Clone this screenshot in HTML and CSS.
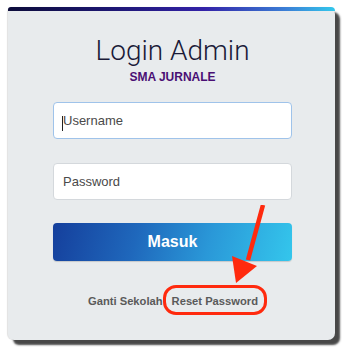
FILE: index.html
```html
<!DOCTYPE html>
<html>
<head>
<meta charset="utf-8">
<link rel="stylesheet" href="styles.css">
</head>
<body>
<div class="card">
  <div class="topbar"></div>
  <h1 class="title">Login Admin</h1>
  <div class="school">SMA JURNALE</div>
  <form class="form">
    <input class="field field-focus" type="text" placeholder="Username">
    <input class="field" type="password" placeholder="Password">
    <button class="btn" type="button">Masuk</button>
  </form>
  <div class="links">
    <a class="link">Ganti Sekolah</a>
    <a class="link">Reset Password</a>
  </div>
  <span class="caret"></span>
  <div class="highlight"></div>
  <svg class="arrow" width="60" height="90" viewBox="0 0 60 90">
    <line x1="35" y1="0" x2="20" y2="55" stroke="#ff2a0e" stroke-width="4.5" stroke-linecap="butt"/>
    <polygon points="4,51 29,61 8,78" fill="#ff2a0e"/>
  </svg>
</div>
</body>
</html>
```
FILE: styles.css
```css
html, body {
  margin: 0;
  padding: 0;
  background: #ffffff;
}
body {
  width: 350px;
  height: 360px;
  overflow: hidden;
  font-family: "Liberation Sans", Arial, sans-serif;
}
.card {
  position: relative;
  margin: 7px 0 0 8px;
  width: 327px;
  height: 333px;
  box-sizing: border-box;
  background: #e8ebed;
  border-radius: 5px 7px 7px 6px;
  box-shadow: 5px 5px 2px rgba(40, 40, 40, 0.85), -1px 0 1px rgba(0,0,0,0.12);
  padding: 0 43px 0 45px;
  display: flex;
  flex-direction: column;
  align-items: stretch;
}
.topbar {
  height: 4px;
  margin: 0 -43px 0 -45px;
  border-radius: 5px 7px 0 0;
  background: linear-gradient(90deg, #0c0c3a 0%, #1c1670 30%, #3322a8 60%, #3b7fd6 85%, #33c8ec 100%);
}
.title {
  margin: 24px 0 0 0;
  font-family: "Roboto", "Liberation Sans", sans-serif;
  font-weight: 300;
  font-size: 28px;
  line-height: 32px;
  color: #1a1a38;
  text-align: center;
}
.school {
  margin-top: 3px;
  font-weight: bold;
  font-size: 12px;
  line-height: 14px;
  color: #4a0f74;
  text-align: center;
}
.form {
  margin-top: 18px;
  display: flex;
  flex-direction: column;
}
.field {
  height: 37px;
  box-sizing: border-box;
  border: 1px solid #d4d8dc;
  border-radius: 4px;
  background: #ffffff;
  padding: 0 9px;
  font-family: "Liberation Sans", Arial, sans-serif;
  font-size: 13px;
  color: #444;
  outline: none;
}
.field::placeholder {
  color: #4a4a4a;
}
.field-focus {
  border-color: #9fc3ea;
}
.field + .field {
  margin-top: 24px;
}
.btn {
  margin-top: 23px;
  height: 38px;
  border: none;
  border-radius: 4px;
  background: linear-gradient(105deg, #153f9c 0%, #1f68bc 35%, #2a98d8 65%, #34c6ec 100%);
  color: #ffffff;
  font-family: "Liberation Sans", Arial, sans-serif;
  font-weight: bold;
  font-size: 16px;
  padding: 0;
  box-shadow: 0 1px 1px rgba(0,0,0,0.15);
}
.links {
  margin-top: 33px;
  display: flex;
  justify-content: center;
  gap: 9px;
  margin-left: 1px;
}
.link {
  font-weight: bold;
  font-size: 11.2px;
  line-height: 14px;
  color: #5a5a5a;
}
.caret {
  position: absolute;
  left: 54px;
  top: 109px;
  width: 1px;
  height: 15px;
  background: #222;
}
.highlight {
  position: absolute;
  left: 155px;
  top: 278px;
  width: 104px;
  height: 30px;
  box-sizing: border-box;
  border: 3px solid #ff2a0e;
  border-radius: 13px;
}
.arrow {
  position: absolute;
  left: 220px;
  top: 198px;
}
```
